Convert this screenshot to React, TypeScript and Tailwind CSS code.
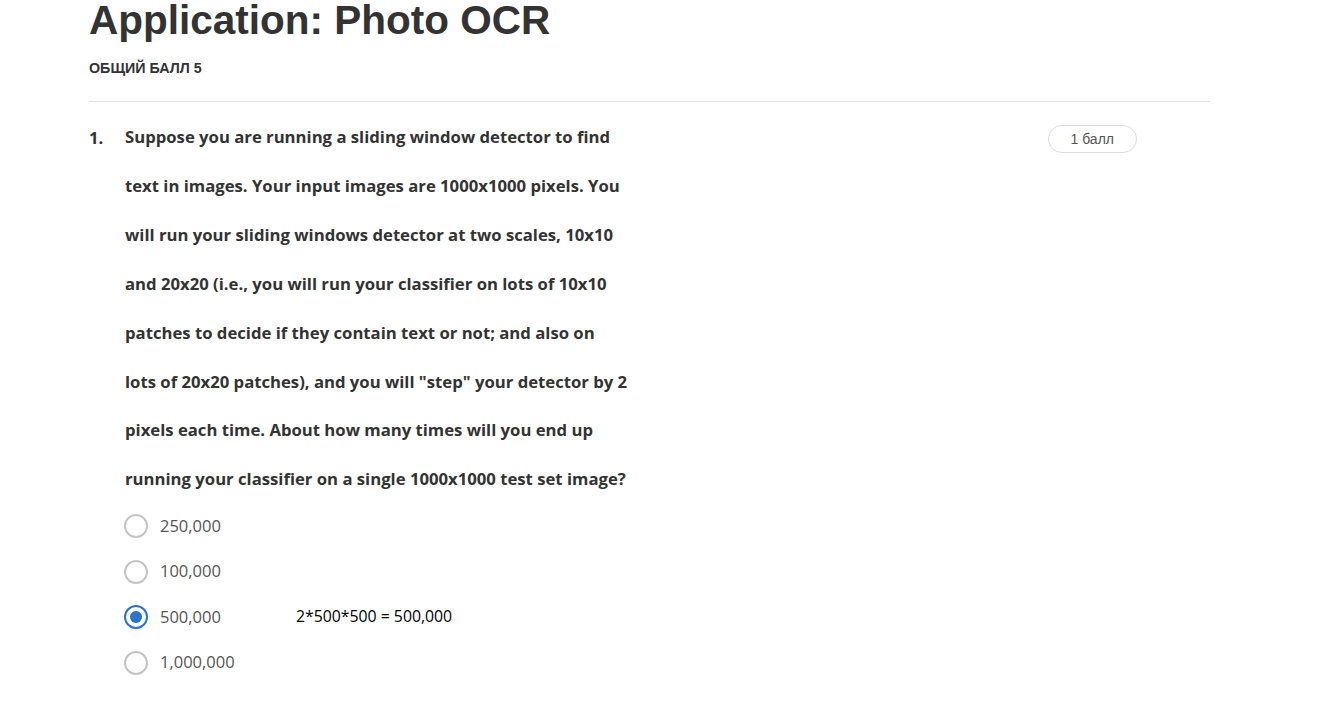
import React from "react";

const questionLines = [
  "Suppose you are running a sliding window detector to find",
  "text in images. Your input images are 1000x1000 pixels. You",
  "will run your sliding windows detector at two scales, 10x10",
  "and 20x20 (i.e., you will run your classifier on lots of 10x10",
  "patches to decide if they contain text or not; and also on",
  'lots of 20x20 patches), and you will "step" your detector by 2',
  "pixels each time. About how many times will you end up",
  "running your classifier on a single 1000x1000 test set image?",
];

const options = [
  { label: "250,000", checked: false },
  { label: "100,000", checked: false },
  { label: "500,000", checked: true, note: "2*500*500 = 500,000" },
  { label: "1,000,000", checked: false },
];

function Radio({ checked }: { checked: boolean }) {
  if (checked) {
    return (
      <span className="w-[24px] h-[24px] rounded-full border-2 border-[#2a73cc] flex items-center justify-center shrink-0">
        <span className="w-[12px] h-[12px] rounded-full bg-[#2a73cc]" />
      </span>
    );
  }
  return <span className="w-[24px] h-[24px] rounded-full border-2 border-[#c4c4c4] shrink-0" />;
}

export default function App() {
  return (
    <div className="min-h-[706px] bg-white pl-[89px] pr-[127px] overflow-hidden">
      <h1
        className="-mt-[3px] text-[40.5px] font-bold text-[#333] leading-[46px]"
        style={{ fontFamily: '"Liberation Sans", Arial, sans-serif' }}
      >
        Application: Photo OCR
      </h1>
      <div
        className="mt-[17px] text-[14.3px] font-bold text-[#333] leading-[16px]"
        style={{ fontFamily: '"Liberation Sans", Arial, sans-serif' }}
      >
        ОБЩИЙ БАЛЛ 5
      </div>
      <div className="mt-[25px] border-t border-[#e3e3e3]" />

      <div className="flex items-start pt-[22px]" style={{ fontFamily: '"Open Sans", sans-serif' }}>
        <div className="w-[36px] text-[16.7px] font-bold text-[#333] leading-[27px]">1.</div>
        <div className="flex-1">
          <div className="flex justify-between">
            <p className="text-[16.7px] font-bold text-[#333] leading-[48.9px] -mt-[11px] whitespace-nowrap">
              {questionLines.map((l, i) => (
                <span key={i} className="block">
                  {l}
                </span>
              ))}
            </p>
            <span
              className="mr-[73px] mt-[1px] h-[28px] px-[22px] rounded-full border border-[#dcdcdc] flex items-center text-[14px] text-[#555]"
              style={{ fontFamily: '"Liberation Sans", Arial, sans-serif' }}
            >
              1 балл
            </span>
          </div>
          <div className="mt-[10px] flex flex-col gap-[21.5px]">
            {options.map((o) => (
              <div key={o.label} className="flex items-center h-[24px] -ml-[1px]">
                <Radio checked={o.checked} />
                <span className="ml-[12px] w-[136px] text-[16.5px] text-[#555]">{o.label}</span>
                {o.note && <span className="text-[15.8px] text-black">{o.note}</span>}
              </div>
            ))}
          </div>
        </div>
      </div>
    </div>
  );
}
